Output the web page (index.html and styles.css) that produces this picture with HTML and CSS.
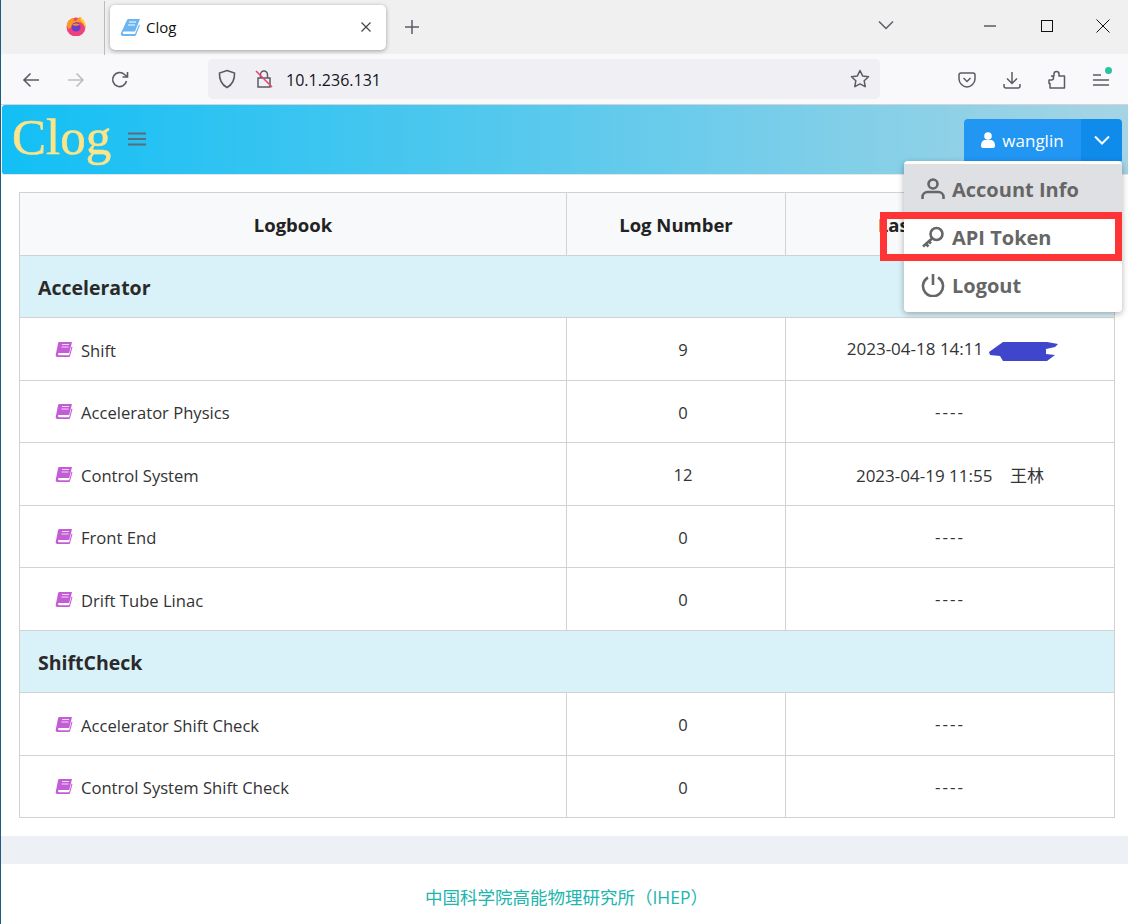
FILE: index.html
```html
<!DOCTYPE html>
<html lang="zh">
<head>
    <meta charset="UTF-8">
    <meta name="viewport" content="width=device-width, initial-scale=1.0">
    <title>Clog</title>
    <link rel="stylesheet" href="styles.css">
</head>
<body>
    <svg class="icon-defs" width="0" height="0">
        <symbol id="book" viewBox="0 0 18 17">
            <path d="M4.500 1H17l-2.800 11H4.200c-1.600 0-1.700 2.200 0 2.200h10l2.300-8.700 1 .5L15 15.200c-.2.500-.5.800-1 .8H2.500C1 16 .4 14.800.800 13.500L3 2.500C3.200 1.500 3.700 1 4.500 1z" fill="#c25dd6"/>
            <path d="M7 3.500h7M6.500 6h7" stroke="#f3d9f8" stroke-width="1"/>
        </symbol>
    </svg>

    <div class="tabstrip">
        <svg class="fx-logo" width="20" height="20" viewBox="0 0 20 20">
            <circle cx="10" cy="11" r="9.500" fill="#f0427a"/>
            <path d="M1 9C2 4 5 2 8 2c-1 2 0 3 2 3 1-2 3-4 5-4 0 1 1 2 2 3 2 2 3 5 2 8-1-3-3-6-7-6-3 0-6 2-6 5L2 13z" fill="#ff9a1f"/>
            <path d="M14 1c3 2 6 6 5 10-1-3-2-5-4-6z" fill="#ffd53a"/>
            <circle cx="10" cy="11" r="4.600" fill="#6a3bd0"/>
            <path d="M6 9c2-2 6-2 8 0-2 0-3 1-4 1z" fill="#ff8a2a"/>
        </svg>
        <div class="tab">
            <svg width="21" height="19" viewBox="0 0 21 19">
                <path d="M1 15 7 2c.3-.6.8-1 1.500-1H20l-5 12.500H4.500C3 13.500 2 15 3.500 16H15l4-9.500 1 .5-4 10c-.2.600-.7 1-1.300 1H3C1 18 .3 16.500 1 15z" fill="#6db4f2"/>
                <path d="M9 4h7M8 7h7" stroke="#fff" stroke-width="1.200"/>
            </svg>
            <span class="tab-title">Clog</span>
            <svg class="tab-close" width="12" height="12" viewBox="0 0 12 12"><path d="M1.500 1.500l9 9M10.500 1.500l-9 9" stroke="#444" stroke-width="1.200"/></svg>
        </div>
        <svg class="new-tab" width="16" height="16" viewBox="0 0 16 16"><path d="M8 1v14M1 8h14" stroke="#5b5b66" stroke-width="1.500"/></svg>
        <svg class="tab-list" width="16" height="10" viewBox="0 0 16 10"><path d="M1 1.500l7 7 7-7" fill="none" stroke="#5b5b66" stroke-width="1.500"/></svg>
        <svg class="win-btn win-min" width="12" height="12" viewBox="0 0 12 12"><path d="M0 6h12" stroke="#111" stroke-width="1"/></svg>
        <svg class="win-btn win-max" width="12" height="12" viewBox="0 0 12 12"><rect x=".5" y=".5" width="11" height="11" fill="none" stroke="#111"/></svg>
        <svg class="win-btn win-close" width="14" height="14" viewBox="0 0 14 14"><path d="M.5.500l13 13M13.500.500l-13 13" stroke="#111" stroke-width="1"/></svg>
    </div>

    <div class="toolbar">
        <svg class="nav-icon" width="18" height="16" viewBox="0 0 18 16"><path d="M17 8H2M8.500 1.500 2 8l6.500 6.500" fill="none" stroke="#5b5b66" stroke-width="1.600"/></svg>
        <svg class="nav-icon nav-off" width="18" height="16" viewBox="0 0 18 16"><path d="M1 8h15M9.500 1.500 16 8l-6.500 6.500" fill="none" stroke="#bcbcc2" stroke-width="1.600"/></svg>
        <svg class="nav-icon" width="18" height="18" viewBox="0 0 18 18"><path d="M15.500 10A7 7 0 1 1 13.500 3.500L16 5.500M16.500 1v5h-5" fill="none" stroke="#5b5b66" stroke-width="1.600"/></svg>
        <div class="urlbar">
            <svg width="18" height="20" viewBox="0 0 18 20"><path d="M9 1.500 16.500 4c.3 6-1 11-7.500 14.500C2.500 15 1.200 10 1.500 4z" fill="none" stroke="#5b5b66" stroke-width="1.600"/></svg>
            <svg class="url-lock" width="18" height="20" viewBox="0 0 18 20"><path d="M3 9h12v9H3zM5.500 9V5.500a3.500 3.500 0 0 1 7 0V9" fill="none" stroke="#5b5b66" stroke-width="1.500"/><path d="M1 2l16 16" stroke="#f0406a" stroke-width="1.600"/></svg>
            <span class="url-text">10.1.236.131</span>
            <svg class="url-star" width="20" height="20" viewBox="0 0 20 20"><path d="M10 1.500l2.600 5.400 5.900.8-4.300 4.100 1 5.900L10 14.900l-5.200 2.800 1-5.900L1.500 7.700l5.900-.8z" fill="none" stroke="#5b5b66" stroke-width="1.500" stroke-linejoin="round"/></svg>
        </div>
        <div class="tool-icons">
            <svg width="18" height="16" viewBox="0 0 18 16"><path d="M3 1h12c1 0 2 1 2 2v4c0 4-4 8-8 8s-8-4-8-8V3c0-1 1-2 2-2z" fill="none" stroke="#5b5b66" stroke-width="1.500"/><path d="M5.500 6 9 9.500 12.500 6" fill="none" stroke="#5b5b66" stroke-width="1.500"/></svg>
            <svg width="18" height="18" viewBox="0 0 18 18"><path d="M9 1v11M4 7.500l5 5 5-5" fill="none" stroke="#5b5b66" stroke-width="1.500"/><path d="M1 13v2c0 1 1 2 2 2h12c1 0 2-1 2-2v-2" fill="none" stroke="#5b5b66" stroke-width="1.500"/></svg>
            <svg width="18" height="20" viewBox="0 0 18 20"><path d="M1 10h2.500a2 2 0 0 0 0-4H6V4a2.500 2.500 0 0 1 5 0v2h5.500v12H2v-4.500H1z" fill="none" stroke="#5b5b66" stroke-width="1.500" stroke-linejoin="round"/></svg>
            <div class="menu-btn">
                <svg width="16" height="14" viewBox="0 0 16 14"><path d="M0 2h8M0 7h16M0 12h16" stroke="#5b5b66" stroke-width="1.500"/></svg>
                <span class="update-dot"></span>
            </div>
        </div>
    </div>

    <div class="page">
        <header class="navbar">
            <span class="brand">Clog</span>
            <svg class="nav-toggle" width="18" height="14" viewBox="0 0 18 14"><path d="M0 1.500h18M0 7h18M0 12.500h18" stroke="#5f6b7a" stroke-width="2"/></svg>
            <div class="user-btn">
                <div class="user-main">
                    <svg width="14" height="16" viewBox="0 0 14 16"><circle cx="7" cy="4" r="3.800" fill="#fff"/><path d="M0 14c0-4 2-6 4-6h6c2 0 4 2 4 6 0 1-1 2-2 2H2c-1 0-2-1-2-2z" fill="#fff"/></svg>
                    wanglin
                </div>
                <div class="user-caret">
                    <svg width="16" height="10" viewBox="0 0 16 10"><path d="M1 1.500l7 7 7-7" fill="none" stroke="#fff" stroke-width="2"/></svg>
                </div>
            </div>
        </header>

        <main class="content">
            <table class="logbooks">
                <colgroup><col class="col-name"><col class="col-num"><col></colgroup>
                <thead>
                    <tr><th>Logbook</th><th>Log Number</th><th class="last-head">Last Submitted</th></tr>
                </thead>
                <tbody>
                    <tr class="group"><td colspan="3">Accelerator</td></tr>
                    <tr>
                        <td class="book-name"><svg class="book" width="18" height="17"><use href="#book"/></svg>Shift</td>
                        <td class="count">9</td>
                        <td class="last">2023-04-18 14:11<svg class="scribble" width="70" height="22" viewBox="0 0 70 22"><path d="M0 12 14 2H58L69 4 66 7 57 9 57 14 66 15 58 21H14L11 16 1 15z" fill="#4046cc"/></svg></td>
                    </tr>
                    <tr>
                        <td class="book-name"><svg class="book" width="18" height="17"><use href="#book"/></svg>Accelerator Physics</td>
                        <td class="count">0</td>
                        <td class="last empty">----</td>
                    </tr>
                    <tr>
                        <td class="book-name"><svg class="book" width="18" height="17"><use href="#book"/></svg>Control System</td>
                        <td class="count">12</td>
                        <td class="last">2023-04-19 11:55&nbsp;&nbsp;&nbsp; 王林</td>
                    </tr>
                    <tr>
                        <td class="book-name"><svg class="book" width="18" height="17"><use href="#book"/></svg>Front End</td>
                        <td class="count">0</td>
                        <td class="last empty">----</td>
                    </tr>
                    <tr>
                        <td class="book-name"><svg class="book" width="18" height="17"><use href="#book"/></svg>Drift Tube Linac</td>
                        <td class="count">0</td>
                        <td class="last empty">----</td>
                    </tr>
                    <tr class="group"><td colspan="3">ShiftCheck</td></tr>
                    <tr>
                        <td class="book-name"><svg class="book" width="18" height="17"><use href="#book"/></svg>Accelerator Shift Check</td>
                        <td class="count">0</td>
                        <td class="last empty">----</td>
                    </tr>
                    <tr>
                        <td class="book-name"><svg class="book" width="18" height="17"><use href="#book"/></svg>Control System Shift Check</td>
                        <td class="count">0</td>
                        <td class="last empty">----</td>
                    </tr>
                </tbody>
            </table>
        </main>

        <div class="footer-band"></div>
        <footer class="footer">中国科学院高能物理研究所（IHEP）</footer>

        <div class="user-menu">
            <div class="menu-item active">
                <svg width="24" height="22" viewBox="0 0 24 22"><circle cx="12" cy="6" r="4.500" fill="none" stroke="#666" stroke-width="2.600"/><path d="M1.500 21v-2c0-3 2.500-5 5-5h11c2.500 0 5 2 5 5v2" fill="none" stroke="#666" stroke-width="2.600"/></svg>
                Account Info
            </div>
            <div class="menu-item">
                <svg width="24" height="22" viewBox="0 0 24 22"><circle cx="15.500" cy="8" r="6" fill="none" stroke="#666" stroke-width="2.600"/><path d="M11 12.500 2 20.500M5 18l2.500 2.500M8 15.500l2 2" fill="none" stroke="#666" stroke-width="2.600"/></svg>
                API Token
            </div>
            <div class="menu-item">
                <svg width="24" height="24" viewBox="0 0 24 24"><path d="M7 4.500a10 10 0 1 0 10 0" fill="none" stroke="#666" stroke-width="2.600"/><path d="M12 1v11" stroke="#666" stroke-width="2.600"/></svg>
                Logout
            </div>
        </div>
        <div class="highlight-box"></div>
    </div>
</body>
</html>
```

FILE: styles.css
```css
html, body { margin: 0; padding: 0; height: 924px; overflow: hidden; }
body { font-family: "Open Sans", "Noto Sans CJK SC", sans-serif; background: #fff; color: #333; border-left: 1px solid #1b5e80; box-sizing: border-box; }
.icon-defs { position: absolute; }

/* browser chrome */
.tabstrip { height: 54px; background: #f0f0f0; display: flex; align-items: center; position: relative; }
.fx-logo { margin-left: 65px; margin-top: -2px; }
.tab { width: 276px; height: 45px; margin-left: 24px; background: #fff; border-radius: 5px; box-shadow: 0 1px 4px rgba(0,0,0,0.35); display: flex; align-items: center; padding: 0 14px 0 10px; box-sizing: border-box; position: relative; }
.tab::before { content: ""; position: absolute; left: -6px; top: -4px; width: 1px; height: 54px; background: #bbb; }
.tab-title { font-size: 15px; color: #111; margin-left: 5px; flex: 1; }
.new-tab { margin-left: 18px; }
.tab-list { margin-left: 458px; margin-top: -4px; }
.win-btn { margin-top: -3px; }
.win-min { margin-left: 90px; }
.win-max { margin-left: 45px; }
.win-close { margin-left: 43px; }

.toolbar { height: 51px; background: #f9f9fb; border-bottom: 1px solid #d4d4d8; display: flex; align-items: center; padding-left: 21px; padding-top: 1px; box-sizing: border-box; }
.nav-icon { margin-right: 27px; }
.nav-off { margin-right: 26px; }
.urlbar { width: 672px; height: 40px; margin-left: 52px; margin-top: -1px; background: #f0f0f4; border-radius: 5px; display: flex; align-items: center; padding: 0 10px; box-sizing: border-box; }
.url-lock { margin-left: 19px; }
.url-text { font-size: 16px; color: #15141a; margin-left: 13px; margin-top: 2px; flex: 1; }
.tool-icons { display: flex; align-items: center; gap: 27px; margin-left: 78px; }
.menu-btn { position: relative; display: flex; }
.update-dot { position: absolute; top: -6px; right: -3px; width: 7px; height: 7px; border-radius: 50%; background: #2ac3a2; }

/* page */
.page { position: relative; height: 819px; }
.navbar { height: 70px; margin-left: 1px; background: linear-gradient(90deg, #12bff5 0%, #a6d4e4 100%); border-radius: 3px 0 0 3px; border-bottom: 1px solid #e4e7ea; display: flex; align-items: center; padding: 0 6px 1px 10px; box-sizing: border-box; }
.brand { font-family: "Liberation Serif", serif; font-size: 51px; color: #fbe48a; -webkit-text-stroke: 0.5px #fbe48a; line-height: 1; margin-top: -4px; }
.nav-toggle { margin-left: 17px; }
.user-btn { margin-left: auto; margin-top: 1px; display: flex; height: 42px; color: #fff; font-size: 17px; border-radius: 4px 4px 0 0; overflow: hidden; }
.user-main { width: 117px; background: #2196f3; display: flex; align-items: center; justify-content: center; gap: 7px; padding-top: 1px; box-sizing: border-box; }
.user-caret { width: 41px; background: #0f8bec; display: flex; align-items: center; justify-content: center; }

.content { padding: 17px 13px 18px 18px; }
.logbooks { width: 1096px; border-collapse: collapse; table-layout: fixed; font-size: 16.600px; }
.col-name { width: 547px; }
.col-num { width: 219px; }
.logbooks th, .logbooks td { border: 1px solid #d2d2d2; height: 62.500px; padding: 3px 0 0; text-align: center; box-sizing: border-box; }
.logbooks th { background: #f8f9fa; font-size: 18.500px; font-weight: 700; color: #222; padding-top: 2px; }
.logbooks th.last-head { padding-right: 4px; }
.logbooks td.book-name { text-align: left; padding-left: 36px; }
.logbooks td.count { padding-left: 14px; padding-top: 2px; }
.logbooks td.last { font-size: 17px; padding-top: 2px; }
.logbooks td.empty { letter-spacing: 2px; padding-top: 0; }
.logbooks tr.group td { background: #d9f1f8; text-align: left; padding: 3px 0 0 18px; font-size: 19.500px; font-weight: 700; color: #2a2a2a; }
.book { margin-right: 8px; margin-left: -1px; vertical-align: -1px; }
.scribble { margin-left: 6px; margin-right: -6px; vertical-align: -7px; }

.footer-band { height: 28px; background: #edf0f5; }
.footer { height: 60px; display: flex; align-items: center; justify-content: center; color: #20b5ad; font-size: 17.500px; box-sizing: border-box; padding-top: 4px; padding-left: 4px; }

/* user dropdown */
.user-menu { position: absolute; top: 56px; right: 6px; width: 218px; padding: 3px 0 4px; background: #fff; border-radius: 4px; box-shadow: 0 2px 6px rgba(0,0,0,0.3); }
.menu-item { height: 48px; display: flex; align-items: center; gap: 7px; padding: 2px 0 0 17px; box-sizing: border-box; font-size: 20px; font-weight: 700; color: #666; }
.menu-item.active { background: #dee0e4; }
.highlight-box { position: absolute; top: 107px; right: 6px; width: 242px; height: 49px; border: 7px solid #ff3535; box-sizing: border-box; }
```
